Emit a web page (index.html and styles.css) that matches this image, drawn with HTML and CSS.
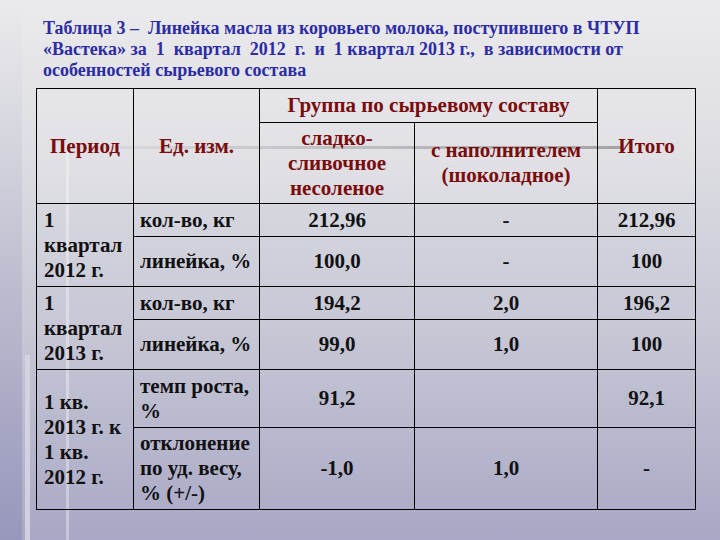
FILE: index.html
```html
<!DOCTYPE html>
<html lang="ru">
<head>
<meta charset="utf-8">
<title>Таблица 3</title>
<link rel="stylesheet" href="styles.css">
</head>
<body>
<div class="slide">
  <h1 class="title">Таблица 3 –&nbsp; Линейка масла из коровьего молока, поступившего в ЧТУП<br>«Вастека» за&nbsp; 1&nbsp; квартал&nbsp; 2012&nbsp; г.&nbsp; и&nbsp; 1 квартал 2013 г.,&nbsp; в зависимости от<br>особенностей сырьевого состава</h1>
  <table class="grid">
    <colgroup>
      <col class="c1"><col class="c2"><col class="c3"><col class="c4"><col class="c5">
    </colgroup>
    <thead>
      <tr class="h1row">
        <th rowspan="2">Период</th>
        <th rowspan="2">Ед. изм.</th>
        <th colspan="2">Группа по сырьевому составу</th>
        <th rowspan="2">Итого</th>
      </tr>
      <tr class="h2row">
        <th>сладко-<br>сливочное<br>несоленое</th>
        <th>с наполнителем<br>(шоколадное)</th>
      </tr>
    </thead>
    <tbody>
      <tr class="r33">
        <td rowspan="2" class="per">1<br>квартал<br>2012 г.</td>
        <td class="unit">кол-во, кг</td>
        <td class="num">212,96</td>
        <td class="num">-</td>
        <td class="num">212,96</td>
      </tr>
      <tr class="r50">
        <td class="unit">линейка, %</td>
        <td class="num">100,0</td>
        <td class="num">-</td>
        <td class="num">100</td>
      </tr>
      <tr class="r33">
        <td rowspan="2" class="per">1<br>квартал<br>2013 г.</td>
        <td class="unit">кол-во, кг</td>
        <td class="num">194,2</td>
        <td class="num">2,0</td>
        <td class="num">196,2</td>
      </tr>
      <tr class="r50">
        <td class="unit">линейка, %</td>
        <td class="num">99,0</td>
        <td class="num">1,0</td>
        <td class="num">100</td>
      </tr>
      <tr class="r58">
        <td rowspan="2" class="per">1 кв.<br>2013 г. к<br>1 кв.<br>2012 г.</td>
        <td class="unit">темп роста,<br>%</td>
        <td class="num">91,2</td>
        <td class="num"></td>
        <td class="num">92,1</td>
      </tr>
      <tr class="r82">
        <td class="unit">отклонение<br>по уд. весу,<br>% (+/-)</td>
        <td class="num">-1,0</td>
        <td class="num">1,0</td>
        <td class="num">-</td>
      </tr>
    </tbody>
  </table>
</div>
</body>
</html>
```

FILE: styles.css
```css
html, body {
  margin: 0;
  padding: 0;
}

body {
  width: 720px;
  height: 540px;
  overflow: hidden;
  font-family: "Liberation Serif", serif;
  background-color: #c8c8d6;
  background-image:
    linear-gradient(90deg, rgba(120,120,126,0.05), rgba(120,120,126,0.55) 75%, rgba(120,120,126,0.7)),
    linear-gradient(rgba(255,255,255,0.35), rgba(255,255,255,0.35)),
    linear-gradient(rgba(225,225,235,0.55), rgba(225,225,235,0.7)),
    linear-gradient(rgba(120,120,170,0.0), rgba(120,120,170,0.35)),
    linear-gradient(180deg, #ebebed 0%, #dcdce2 30%, #c4c4d4 65%, #a8a8c6 100%);
  background-size:
    555px 3px,
    3px 395px,
    5px 190px,
    22px 540px,
    720px 540px;
  background-position:
    67px 146px,
    66px 146px,
    25px 355px,
    0 0,
    0 0;
  background-repeat: no-repeat;
}

.slide {
  padding: 18px 0 0 0;
}

.title {
  margin: 0 0 0 43px;
  font-family: "Liberation Serif", serif;
  font-size: 18px;
  line-height: 21px;
  font-weight: bold;
  color: #2c2ca4;
  white-space: nowrap;
  height: 70px;
}

.grid {
  margin-left: 36px;
  border-collapse: collapse;
  table-layout: fixed;
  width: 659px;
  font-family: "Liberation Serif", serif;
  font-size: 21px;
  line-height: 25px;
  font-weight: bold;
  color: #111;
}

.c1 { width: 97px; }
.c2 { width: 126px; }
.c3 { width: 155px; }
.c4 { width: 183px; }
.c5 { width: 98px; }

.grid th,
.grid td {
  border: 1.5px solid #000;
  padding: 0 6px;
  vertical-align: middle;
}

.grid th {
  color: #7a0c0c;
  text-align: center;
  font-weight: bold;
  background: rgba(255,255,255,0.12);
}

.h1row { height: 34px; }
.h2row { height: 81px; }
.r33 { height: 33px; }
.r50 { height: 50px; }
.r58 { height: 58px; }
.r82 { height: 82px; }

.grid td.per {
  text-align: left;
  padding-left: 7px;
  padding-right: 0;
  white-space: nowrap;
}

.grid td.unit {
  text-align: left;
  padding-left: 6px;
  padding-right: 0;
  white-space: nowrap;
}

.grid td.num {
  text-align: center;
}
```
